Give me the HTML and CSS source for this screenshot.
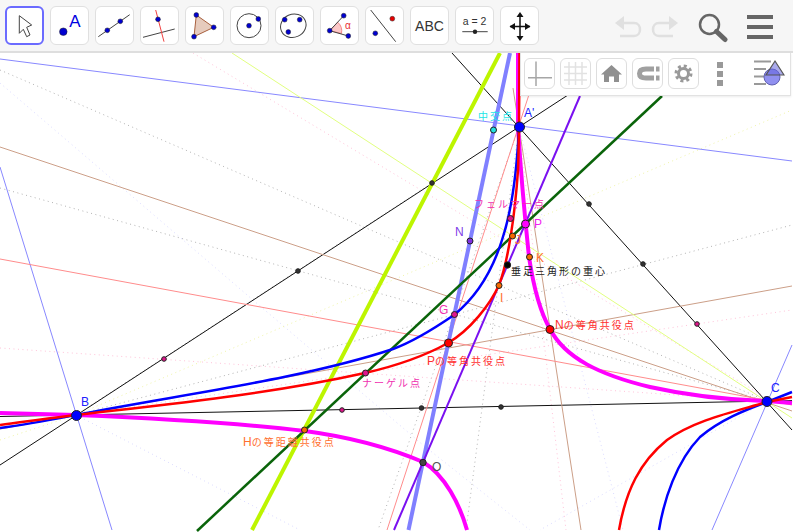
FILE: index.html
```html
<!DOCTYPE html>
<html lang="ja">
<head>
<meta charset="utf-8">
<title>GeoGebra</title>
<link rel="stylesheet" href="styles.css">
</head>
<body>
<div class="app">
  <header class="toolbar">
    <div class="tools">
      <button class="tool tool-active"><svg class="ico" viewBox="0 0 39 39"><path class="cursor" d="M14.3 9.7 26.7 19 21.7 21.3 25 29 21.7 30.7 18.3 23.3 14.3 27.3Z"/></svg></button>
      <button class="tool"><svg class="ico" viewBox="0 0 39 39"><circle class="pt" cx="13.3" cy="25.7" r="3.8"/><text class="ico-a" x="25" y="20.5">A</text></svg></button>
      <button class="tool"><svg class="ico" viewBox="0 0 39 39"><path class="ln" d="M3.3 30.7 34.7 8.7"/><circle class="pt" cx="12.3" cy="24.3" r="2.4"/><circle class="pt" cx="25.3" cy="15.3" r="2.4"/></svg></button>
      <button class="tool"><svg class="ico" viewBox="0 0 39 39"><path class="ln" d="M3 31.3 34.7 23"/><path class="ln-red" d="M15.7 4 24 35.7"/><circle class="pt" cx="18" cy="13.3" r="2.4"/></svg></button>
      <button class="tool"><svg class="ico" viewBox="0 0 39 39"><path class="poly" d="M11.3 9 28.7 21.3 9 30.7Z"/><circle class="pt" cx="11.3" cy="9" r="2.4"/><circle class="pt" cx="28.7" cy="21.3" r="2.4"/><circle class="pt" cx="9" cy="30.7" r="2.4"/></svg></button>
      <button class="tool"><svg class="ico" viewBox="0 0 39 39"><circle class="ring" cx="19" cy="19.7" r="12"/><circle class="pt" cx="19" cy="19.7" r="2.4"/><circle class="pt" cx="28.3" cy="13" r="2.4"/></svg></button>
      <button class="tool"><svg class="ico" viewBox="0 0 39 39"><ellipse class="ring" cx="18.3" cy="19.7" rx="13" ry="11.5" transform="rotate(-25 18.3 19.7)"/><circle class="pt" cx="9.7" cy="13.7" r="2.4"/><circle class="pt" cx="24.7" cy="13.7" r="2.4"/><circle class="pt" cx="13.3" cy="26" r="2.4"/></svg></button>
      <button class="tool"><svg class="ico" viewBox="0 0 39 39"><path class="sector" d="M9.7 24.7 17.7 16.2A12 12 0 0 1 21.5 27.5Z"/><path class="ln" d="M23.7 9.7 9.7 24.7 28.3 30"/><text class="ico-alpha" x="25" y="23">α</text><circle class="pt" cx="23.7" cy="9.7" r="2.4"/><circle class="pt" cx="9.7" cy="24.7" r="2.4"/><circle class="pt" cx="28.3" cy="30" r="2.4"/></svg></button>
      <button class="tool"><svg class="ico" viewBox="0 0 39 39"><path class="ln" d="M5.7 4 30.7 35.7"/><circle class="pt" cx="10.3" cy="27.3" r="2.4"/><circle class="pt-red" cx="27.3" cy="12.7" r="2.4"/></svg></button>
      <button class="tool"><svg class="ico" viewBox="0 0 39 39"><text class="ico-abc" x="19.5" y="25">ABC</text></svg></button>
      <button class="tool"><svg class="ico" viewBox="0 0 39 39"><text class="ico-slider" x="19.5" y="19">a = 2</text><path class="ln" d="M7.3 25.7H32.7"/><circle class="pt-dark" cx="20" cy="25.7" r="2.2"/></svg></button>
      <button class="tool"><svg class="ico" viewBox="0 0 39 39"><path class="ln-black" d="M20 10V31M10 20.500H30"/><path class="head" d="M20 6 23.500 11H16.500ZM20 35 16.500 30H23.500ZM9.500 20.500 15 17V24ZM30.500 20.500 25 24V17Z"/></svg></button>
    </div>
    <div class="actions">
      <svg class="undo" viewBox="0 0 28 24"><path class="hist" d="M7 8H20C24 8 26 11 26 14.500S24 21 20 21H6"/><path class="hist-head" d="M1 8 10 1V15Z"/></svg>
      <svg class="redo" viewBox="0 0 28 24"><path class="hist" d="M21 8H8C4 8 2 11 2 14.500S4 21 8 21H22"/><path class="hist-head" d="M27 8 18 1V15Z"/></svg>
      <svg class="search" viewBox="0 0 30 30"><circle class="lens" cx="11.500" cy="11.500" r="9.500"/><path class="grip" d="M18.500 18.500 27 26.500"/></svg>
      <div class="menu"><span class="bar"></span><span class="bar"></span><span class="bar"></span></div>
    </div>
  </header>
  <main class="canvas">
    <svg class="geo" viewBox="0 53 793 479">
      <g class="dots gray">
        <path d="M0 70 767 401"/><path d="M0 188 767 401"/><path d="M76 415 792 225"/><path d="M519 127 466 530"/><path d="M519 127 421 408 378 530"/><path d="M76 415 432 183"/>
      </g>
      <g class="dots lav">
        <path d="M0 83 253 300 423 445 530 530"/><path d="M519 127 623 530"/><path d="M76 415 300 530"/><path d="M767 401 540 530"/>
      </g>
      <g class="dots pink">
        <path d="M193 53 767 398"/><path d="M0 348 792 403"/><path d="M76 415 792 310"/><path d="M519 127 566 530"/>
      </g>
      <g class="dots yel"><path d="M76 415 792 110"/><path d="M0 440 76 415"/></g>
      <g class="thin">
        <path class="c-black" d="M0 465 568 95"/><path class="c-black" d="M452 53 792 430"/><path class="c-black" d="M0 416.500 792 400.600"/>
        <path class="c-blue" d="M0 59 792 161"/><path class="c-blue" d="M0 167 112 530"/><path class="c-blue" d="M792 345 712 530"/>
        <path class="c-brown" d="M0 147 792 411"/><path class="c-brown" d="M0 429 792 286"/><path class="c-brown" d="M513 88 581 530"/>
        <path class="c-salmon" d="M0 259 792 405"/><path class="c-salmon" d="M387 530 537 70"/>
        <path class="c-yellow" d="M232 53 792 418"/>
      </g>
      <path class="s-lime" d="M500 53 252 530"/>
      <path class="s-peri" d="M510 53 408.500 530"/>
      <path class="s-green" d="M662 96 197 531"/>
      <path class="s-purple" d="M580 96 394 530"/>
      <g class="conic">
        <path class="s-mag" d="M0 413 76 415C150 418 230 422 305 431 350 437 390 448 423 462 445 475 460 505 467 530"/>
        <path class="s-mag" d="M518 53V127C520 160 523 200 529 257 534 290 540 312 550 329 565 358 600 375 650 387 690 396 730 400 767 401L792 403"/>
        <path class="s-blue" d="M0 428C30 424 50 420 76 415 170 396 300 380 393 349 415 341 435 328 454 315 475 298 492 272 502 240 512 210 517 170 519 127"/>
        <path class="s-blue" d="M659 530C664 500 676 462 700 437 720 420 745 410 767 402L792 392"/>
        <path class="s-red" d="M0 425C30 421 50 418 76 415 170 404 270 394 365 373 400 365 430 353 448 343 470 330 490 305 499 285 508 262 515 215 518 170 519 150 519 130 519.500 53"/>
        <path class="s-red" d="M619 530C626 490 640 462 667 440 695 420 733 412 767 402L792 397"/>
      </g>
      <g class="points">
        <circle class="f-dark" cx="432" cy="183" r="2.300"/><circle class="f-dark" cx="298" cy="271" r="2.300"/><circle class="f-rose" cx="164" cy="359" r="2.300"/>
        <circle class="f-dark" cx="589" cy="204" r="2.300"/><circle class="f-dark" cx="643" cy="264" r="2.300"/><circle class="f-rose" cx="697" cy="324" r="2.300"/>
        <circle class="f-rose" cx="342" cy="410" r="2.300"/><circle class="f-dark" cx="421.500" cy="408" r="2.300"/><circle class="f-dark" cx="501" cy="407" r="2.300"/>
        <circle class="f-cyan" cx="493.500" cy="130" r="3"/><circle class="f-rose" cx="510.500" cy="218.500" r="3"/><circle class="f-orange" cx="512.500" cy="236" r="3"/>
        <circle class="f-orange" cx="529.500" cy="257" r="3"/><circle class="f-black" cx="507.500" cy="265" r="3.200"/><circle class="f-orange" cx="499" cy="285.500" r="3"/>
        <circle class="f-violet" cx="470" cy="241" r="3"/><circle class="f-rose" cx="454.500" cy="314.500" r="3"/><circle class="f-rose" cx="365.500" cy="373" r="3"/>
        <circle class="f-orange" cx="304.500" cy="430" r="3"/><circle class="f-gray" cx="423" cy="462.500" r="3.200"/>
        <circle class="f-mag" cx="525.500" cy="224" r="4"/><circle class="f-red" cx="448.500" cy="343" r="4"/><circle class="f-red" cx="550" cy="329.500" r="4"/>
        <circle class="f-blue" cx="519.500" cy="127" r="5"/><circle class="f-blue" cx="76.500" cy="415.500" r="5"/><circle class="f-blue" cx="767" cy="401.500" r="5"/>
      </g>
      <g class="labels">
        <text class="t-cyan jp" x="478" y="120">中交点</text>
        <text class="t-blue" x="524" y="117">A'</text>
        <text class="t-pink jp" x="474" y="208">フェルマー点</text>
        <text class="t-mag" x="534" y="228">P</text>
        <text class="t-orange" x="515" y="244">J</text>
        <text class="t-orange" x="536" y="262">K</text>
        <text class="t-black jp" x="511" y="275">垂足三角形の重心</text>
        <text class="t-violet" x="455" y="236">N</text>
        <text class="t-orange" x="500" y="302">I</text>
        <text class="t-pink" x="439" y="314">G</text>
        <text class="t-red jp" x="555" y="329"><tspan class="lat">N</tspan>の等角共役点</text>
        <text class="t-red jp" x="427" y="365"><tspan class="lat">P</tspan>の等角共役点</text>
        <text class="t-pink jp" x="362" y="387">ナーゲル点</text>
        <text class="t-orange jp" x="243" y="446"><tspan class="lat">H</tspan>の等距離共役点</text>
        <text class="t-gray" x="432" y="471">O</text>
        <text class="t-blue" x="81" y="406">B</text>
        <text class="t-blue" x="771" y="392">C</text>
      </g>
    </svg>
    <div class="stylebar">
      <button class="sbtn"><svg class="ico" viewBox="0 0 31 31"><path class="sb-line" d="M12 3.500V28M4 19.700H28"/></svg></button>
      <button class="sbtn"><svg class="ico" viewBox="0 0 31 31"><path class="sb-grid" d="M9 4V27M15.500 4V27M22 4V27M4 9H27M4 15.500H27M4 22H27"/></svg></button>
      <button class="sbtn"><svg class="ico" viewBox="0 0 31 31"><path class="sb-fill" d="M15.500 7 26 16.500H23V24H18V18.500H13V24H8V16.500H5Z"/></svg></button>
      <button class="sbtn"><svg class="ico" viewBox="0 0 31 31"><path class="sb-mag" d="M22 11H14C9.500 11 7.500 13 7.500 15.500S9.500 20 14 20H22"/><path class="sb-tip" d="M24 8.500H27.500V13.500H24ZM24 17.500H27.500V22.500H24Z"/></svg></button>
      <button class="sbtn"><svg class="ico" viewBox="0 0 31 31"><circle class="sb-gear" cx="15.500" cy="15.500" r="5"/><circle class="sb-teeth" cx="15.500" cy="15.500" r="7.500"/></svg></button>
      <div class="more"><span class="sq"></span><span class="sq"></span><span class="sq"></span></div>
      <svg class="views" viewBox="0 0 31 31"><path class="v-lines" d="M0 3.500H17M0 11H12M0 18.500H10M0 26H12"/><circle class="v-circle" cx="18" cy="19" r="8"/><path class="v-tri" d="M21 3 30 17H12Z"/></svg>
    </div>
  </main>
</div>
</body>
</html>
```
FILE: styles.css
```css
* { box-sizing: border-box; }
html, body { margin: 0; height: 100%; overflow: hidden; background: #fff; }
.app { width: 793px; height: 532px; display: flex; flex-direction: column; font-family: "Liberation Sans", sans-serif; }

.toolbar { flex: 0 0 53px; display: flex; justify-content: space-between; background: #f6f6f6; border-bottom: 2px solid #dedede; padding: 6px 20px 0 5px; }
.tools { display: flex; gap: 6px; height: 39px; }
.tool { width: 39px; height: 39px; padding: 0; background: #fff; border: 1px solid #e0e0e0; border-radius: 6px; display: flex; align-items: center; justify-content: center; }
.tool-active { border: 2px solid #6b6bff; }
.ico { display: block; flex: none; width: 39px; height: 39px; overflow: visible; }
.sbtn .ico { width: 31px; height: 31px; }

.cursor { fill: #fff; stroke: #444; stroke-width: 1; stroke-linejoin: round; }
.pt { fill: #0000d0; stroke: #222; stroke-width: .5; }
.pt-red { fill: #e80000; stroke: #222; stroke-width: .5; }
.pt-dark { fill: #222; }
.ln { fill: none; stroke: #444; stroke-width: 1; }
.ln-red { fill: none; stroke: #f04040; stroke-width: 1; }
.ln-black { fill: none; stroke: #111; stroke-width: 1.500; }
.head { fill: #111; }
.poly { fill: #e6cbbd; stroke: #a8603e; stroke-width: 1; }
.ring { fill: none; stroke: #444; stroke-width: 1; }
.sector { fill: #fcc8c8; stroke: #f07070; stroke-width: .8; }
.ico-a { font-size: 17px; fill: #0000e0; text-anchor: middle; }
.ico-alpha { font-size: 10px; fill: #e83030; }
.ico-abc { font-size: 14px; fill: #333; text-anchor: middle; }
.ico-slider { font-size: 10.500px; fill: #333; text-anchor: middle; }

.actions { display: flex; align-items: flex-start; }
.undo, .redo { width: 28px; height: 24px; margin-top: 9px; }
.redo { margin-left: 9px; }
.hist { fill: none; stroke: #e0e0e0; stroke-width: 2.500; }
.hist-head { fill: #e0e0e0; }
.search { width: 30px; height: 30px; margin: 7px 0 0 19px; }
.lens { fill: none; stroke: #666; stroke-width: 2.500; }
.grip { fill: none; stroke: #666; stroke-width: 5; stroke-linecap: round; }
.menu { width: 26px; margin: 9px 0 0 19px; display: flex; flex-direction: column; gap: 6.500px; }
.bar { display: block; height: 3.500px; background: #666; }

.canvas { flex: 1; position: relative; min-height: 0; overflow: hidden; }
.geo { display: block; width: 793px; height: 479px; }

.dots path { fill: none; stroke-width: 1; stroke-dasharray: 1 3.500; }
.gray path { stroke: #b4b4b4; }
.lav path { stroke: #dcdcff; }
.pink path { stroke: #ffc4da; }
.yel path { stroke: #f0f5a8; }
.thin path { fill: none; stroke-width: 1; }
.c-black { stroke: #111; }
.c-blue { stroke: #8888ff; }
.c-brown { stroke: #cc9f88; }
.c-salmon { stroke: #ff8c8c; }
.c-yellow { stroke: #e2ff80; }
.s-lime { fill: none; stroke: #bdf500; stroke-width: 4; }
.s-peri { fill: none; stroke: #8080ff; stroke-width: 4; }
.s-green { fill: none; stroke: #0a640a; stroke-width: 2.500; }
.s-purple { fill: none; stroke: #7a10f0; stroke-width: 2; }
.s-mag { fill: none; stroke: #ff00ff; stroke-width: 4; }
.s-blue { fill: none; stroke: #0000ff; stroke-width: 2.500; }
.s-red { fill: none; stroke: #ff0000; stroke-width: 2.500; }

.points circle { stroke: #222; stroke-width: 1; }
.f-dark { fill: #333; }
.f-rose { fill: #e0168c; }
.f-cyan { fill: #22e0e0; }
.f-orange { fill: #f56a00; }
.f-black { fill: #000; }
.f-violet { fill: #8030e0; }
.f-gray { fill: #444; }
.f-mag { fill: #ff00ff; }
.f-red { fill: #ff0000; }
.f-blue { fill: #0000ff; }

.labels text { font-family: "Liberation Sans", "Noto Sans CJK JP", sans-serif; font-size: 12px; }
.labels .jp { font-size: 10px; letter-spacing: 2px; font-weight: 400; }
.labels .lat { font-size: 12px; letter-spacing: 0; }
.t-cyan { fill: #22e6e6; }
.t-blue { fill: #2020ff; }
.t-pink { fill: #f030b0; }
.t-mag { fill: #f020f0; }
.t-orange { fill: #ff7030; }
.t-black { fill: #222; }
.t-violet { fill: #8040e8; }
.t-red { fill: #ff3030; }
.t-gray { fill: #555; }

.stylebar { position: absolute; top: 0; right: 2px; width: 271px; height: 43px; background: #fff; border: 1px solid #e2e2e2; border-top: 0; display: flex; align-items: flex-start; gap: 5px; padding: 5px 0 0 3px; box-shadow: 0 1px 2px rgba(0,0,0,.08); }
.sbtn { width: 31px; height: 31px; padding: 0; background: #fff; border: 1px solid #dedede; border-radius: 6px; display: flex; align-items: center; justify-content: center; }
.sb-line { fill: none; stroke: #a6a6a6; stroke-width: 1.500; }
.sb-grid { fill: none; stroke: #e2e2e2; stroke-width: 1.500; }
.sb-fill { fill: #909090; }
.sb-mag { fill: none; stroke: #a0a0a0; stroke-width: 5; }
.sb-tip { fill: #a0a0a0; }
.sb-gear { fill: none; stroke: #999; stroke-width: 3; }
.sb-teeth { fill: none; stroke: #999; stroke-width: 3; stroke-dasharray: 3 2.890; }
.more { display: flex; flex-direction: column; gap: 3px; margin: 4px 0 0 13px; }
.sq { display: block; width: 6px; height: 6px; background: #999; }
.views { width: 31px; height: 31px; margin-left: 26px; flex: none; }
.v-lines { fill: none; stroke: #999; stroke-width: 2; }
.v-circle { fill: #9090f0; stroke: #6060b0; stroke-width: 1; }
.v-tri { fill: rgba(100,100,220,.55); stroke: #555; stroke-width: 1.200; }
```
